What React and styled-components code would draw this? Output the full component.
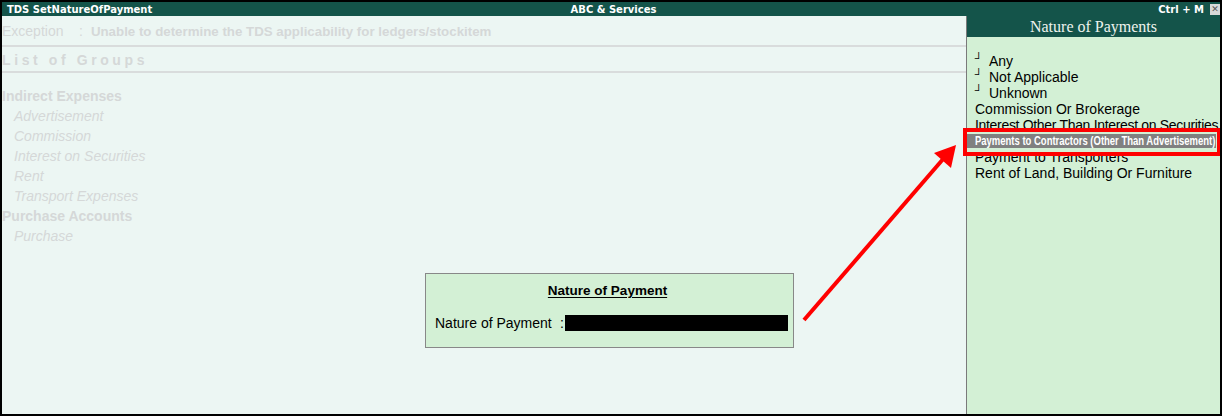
import styled, { createGlobalStyle } from "styled-components";

const Global = createGlobalStyle`
  html, body { margin: 0; padding: 0; background: #fff; }
  * { box-sizing: border-box; }
`;

const Frame = styled.div`
  position: relative;
  width: 1222px;
  height: 416px;
  border: 2px solid #000;
  display: flex;
  flex-direction: column;
  font-family: "Liberation Sans", Arial, sans-serif;
  overflow: hidden;
`;

const TitleBar = styled.div`
  height: 14px;
  background: #14544a;
  color: #fff;
  display: grid;
  grid-template-columns: 1fr auto 1fr;
  align-items: center;
  font-family: "DejaVu Sans", Tahoma, sans-serif;
  font-weight: bold;
  font-size: 10px;
  padding-left: 5px;
`;

const TitleRight = styled.div`
  display: flex;
  justify-content: flex-end;
  align-items: center;
  gap: 6px;
`;

const CloseBox = styled.div`
  width: 10px;
  height: 11px;
  background: #d8d8d8;
  color: #555;
  font-size: 9px;
  line-height: 11px;
  text-align: center;
`;

const Body = styled.div`
  flex: 1;
  display: flex;
`;

const LeftPanel = styled.div`
  flex: 1;
  background: #ecf6f3;
  color: #d5d8d8;
  display: flex;
  flex-direction: column;
`;

const ExceptionRow = styled.div`
  display: flex;
  font-size: 14px;
  height: 29px;
  align-items: center;
  padding-top: 1px;
`;

const ExLabel = styled.span`
  width: 77px;
`;

const ExText = styled.span`
  font-weight: bold;
  font-size: 13.3px;
  padding-left: 8px;
`;

const Rule = styled.div`
  height: 2px;
  background: #d9dcdc;
`;

const ListHeading = styled.div`
  height: 24px;
  display: flex;
  align-items: center;
  font-size: 14px;
  font-weight: bold;
  letter-spacing: 3.6px;
  padding-top: 1px;
`;

const Groups = styled.div`
  padding-top: 13px;
  display: flex;
  flex-direction: column;
`;

const GroupRow = styled.div`
  height: 20px;
  line-height: 20px;
  font-size: 14px;
  font-weight: ${(p) => (p.$group ? "bold" : "normal")};
  font-style: ${(p) => (p.$group ? "normal" : "italic")};
  padding-left: ${(p) => (p.$group ? "0" : "12px")};
`;

const RightPanel = styled.div`
  width: 254px;
  border-left: 1px solid #7a7a7a;
  background: #d3f0d5;
  display: flex;
  flex-direction: column;
`;

const RightHeading = styled.div`
  height: 21px;
  background: #14544a;
  color: #eef3ee;
  font-family: "Liberation Serif", "Times New Roman", serif;
  font-size: 16px;
  display: flex;
  align-items: center;
  justify-content: center;
`;

const Options = styled.div`
  padding-top: 16px;
  display: flex;
  flex-direction: column;
`;

const Option = styled.div`
  height: 16px;
  line-height: 16px;
  font-size: 14px;
  letter-spacing: ${(p) => (p.$tight ? "-0.32px" : "0")};
  color: #000;
  padding-left: 8px;
  white-space: nowrap;
  display: flex;
  align-items: center;
`;

const Mark = styled.span`
  width: 14px;
  font-size: 11px;
  line-height: 11px;
  align-self: flex-start;
  padding-top: 0;
`;

const Selected = styled.div`
  height: 14px;
  margin: 1px 4px 1px 0;
  background: #808080;
  color: #fff;
  font-weight: bold;
  font-size: 12px;
  line-height: 14px;
  padding-left: 8px;
  white-space: nowrap;
  overflow: hidden;
`;

const Squeeze = styled.span`
  display: inline-block;
  transform: scaleX(0.79);
  transform-origin: left center;
`;

const Dialog = styled.div`
  position: absolute;
  left: 423px;
  top: 271px;
  width: 369px;
  height: 75px;
  background: #d3f0d5;
  border: 1px solid #888;
  color: #000;
  display: flex;
  flex-direction: column;
  padding: 9px 5px 0 9px;
`;

const DialogTitle = styled.div`
  text-align: center;
  font-weight: bold;
  font-size: 13.5px;
  text-decoration: underline;
  text-underline-offset: 2px;
  height: 22px;
  padding-right: 8px;
`;

const FieldRow = styled.div`
  display: flex;
  align-items: center;
  margin-top: 10px;
  font-size: 14px;
`;

const FieldLabel = styled.span`
  width: 125px;
`;

const FieldValue = styled.div`
  flex: 1;
  height: 16px;
  margin-left: 1px;
  background: #000;
`;

const Overlay = styled.svg`
  position: absolute;
  left: -2px;
  top: -2px;
  pointer-events: none;
`;

const groups = [
  ["Indirect Expenses", true],
  ["Advertisement"],
  ["Commission"],
  ["Interest on Securities"],
  ["Rent"],
  ["Transport Expenses"],
  ["Purchase Accounts", true],
  ["Purchase"],
];

export default function App() {
  return (
    <>
      <Global />
      <Frame>
        <TitleBar>
          <span>TDS SetNatureOfPayment</span>
          <span>ABC &amp; Services</span>
          <TitleRight>
            <span>Ctrl + M</span>
            <CloseBox>✕</CloseBox>
          </TitleRight>
        </TitleBar>
        <Body>
          <LeftPanel>
            <ExceptionRow>
              <ExLabel>Exception</ExLabel>
              <span>:</span>
              <ExText>Unable to determine the TDS applicability for ledgers/stockitem</ExText>
            </ExceptionRow>
            <Rule />
            <ListHeading>List of Groups</ListHeading>
            <Rule />
            <Groups>
              {groups.map(([name, g]) => (
                <GroupRow key={name} $group={g}>
                  {name}
                </GroupRow>
              ))}
            </Groups>
          </LeftPanel>
          <RightPanel>
            <RightHeading>Nature of Payments</RightHeading>
            <Options>
              <Option><Mark>┘</Mark>Any</Option>
              <Option><Mark>┘</Mark>Not Applicable</Option>
              <Option><Mark>┘</Mark>Unknown</Option>
              <Option>Commission Or Brokerage</Option>
              <Option $tight>Interest Other Than Interest on Securities</Option>
              <Selected>
                <Squeeze>Payments to Contractors (Other Than Advertisement)</Squeeze>
              </Selected>
              <Option>Payment to Transporters</Option>
              <Option>Rent of Land, Building Or Furniture</Option>
            </Options>
          </RightPanel>
        </Body>
        <Dialog>
          <DialogTitle>Nature of Payment</DialogTitle>
          <FieldRow>
            <FieldLabel>Nature of Payment</FieldLabel>
            <span>:</span>
            <FieldValue />
          </FieldRow>
        </Dialog>
        <Overlay width="1222" height="416" viewBox="0 0 1222 416">
          <rect x="965" y="130" width="254" height="24" fill="none" stroke="#ff0000" strokeWidth="4" />
          <line x1="804" y1="320" x2="944" y2="158" stroke="#ff0000" strokeWidth="4" />
          <polygon points="956,145 934,153 951,168" fill="#ff0000" />
        </Overlay>
      </Frame>
    </>
  );
}
